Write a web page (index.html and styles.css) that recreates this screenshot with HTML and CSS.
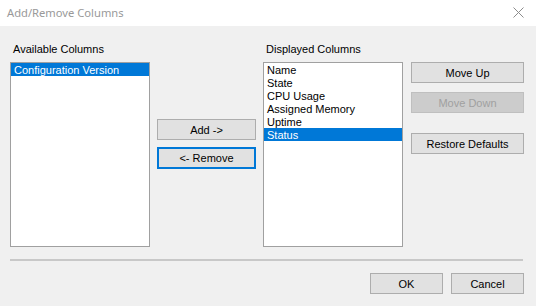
FILE: index.html
```html
<!DOCTYPE html>
<html lang="en">
<head>
    <meta charset="UTF-8">
    <meta name="viewport" content="width=device-width, initial-scale=1.0">
    <title>Add/Remove Columns</title>
    <link rel="stylesheet" href="styles.css">
</head>
<body>
    <div class="dialog">
        <div class="titlebar">
            <span class="title">Add/Remove Columns</span>
            <svg class="close" width="11" height="11" viewBox="0 0 11 11">
                <path d="M0.5 0.5 L10.5 10.5 M10.5 0.5 L0.5 10.5" stroke="#8c8c8c" stroke-width="1" fill="none"/>
            </svg>
        </div>
        <div class="client">
            <div class="columns">
                <div class="group">
                    <div class="label">Available Columns</div>
                    <ul class="listbox">
                        <li class="selected">Configuration Version</li>
                    </ul>
                </div>
                <div class="mid">
                    <button class="btn">Add -&gt;</button>
                    <button class="btn focused">&lt;- Remove</button>
                </div>
                <div class="group">
                    <div class="label">Displayed Columns</div>
                    <ul class="listbox">
                        <li>Name</li>
                        <li>State</li>
                        <li>CPU Usage</li>
                        <li>Assigned Memory</li>
                        <li>Uptime</li>
                        <li class="selected">Status</li>
                    </ul>
                </div>
                <div class="side">
                    <button class="btn">Move Up</button>
                    <button class="btn" disabled>Move Down</button>
                    <button class="btn restore">Restore Defaults</button>
                </div>
            </div>
            <div class="separator"></div>
            <div class="footer">
                <button class="btn wide">OK</button>
                <button class="btn wide">Cancel</button>
            </div>
        </div>
    </div>
</body>
</html>
```

FILE: styles.css
```css
body {
    margin: 0;
    padding: 0;
    background: #f0f0f0;
    font-family: "Liberation Sans", Arial, sans-serif;
    font-size: 11px;
    color: #000;
}
.dialog {
    width: 536px;
    height: 306px;
    overflow: hidden;
}
.titlebar {
    height: 26px;
    background: #fff;
    display: flex;
    align-items: center;
    justify-content: space-between;
    padding: 0 12px 0 7px;
}
.title {
    font-family: "Noto Sans", "Open Sans", sans-serif;
    font-size: 11.2px;
    color: #999;
    margin-top: -1px;
}
.close {
    display: block;
    margin-top: -1px;
}
.client {
    height: 280px;
    box-sizing: border-box;
    padding: 17px 12px 0 10px;
}
.columns {
    display: flex;
}
.group {
    width: 140px;
    display: flex;
    flex-direction: column;
}
.label {
    height: 13px;
    line-height: 13px;
    padding-left: 3px;
    margin-bottom: 6px;
}
.listbox {
    list-style: none;
    margin: 0;
    padding: 0;
    height: 185px;
    box-sizing: border-box;
    background: #fff;
    border: 1px solid #a0a0a0;
}
.listbox li {
    height: 13px;
    line-height: 14px;
    padding-left: 3px;
    white-space: nowrap;
}
.listbox li.selected {
    background: #0078d7;
    color: #fff;
}
.mid {
    width: 99px;
    margin: 0 7px;
    padding-top: 76px;
    display: flex;
    flex-direction: column;
    gap: 7px;
}
.side {
    width: 113px;
    margin-left: 8px;
    padding-top: 19px;
    display: flex;
    flex-direction: column;
    gap: 9px;
}
.btn {
    height: 21px;
    box-sizing: border-box;
    padding: 0;
    font-family: "Liberation Sans", Arial, sans-serif;
    font-size: 11px;
    color: #000;
    background: #e1e1e1;
    border: 1px solid #adadad;
    border-radius: 0;
}
.btn.focused {
    height: 22px;
    border: 2px solid #0078d7;
}
.btn:disabled {
    background: #cccccc;
    border-color: #bfbfbf;
    color: #a0a0a0;
}
.btn.restore {
    margin-top: 11px;
}
.separator {
    height: 2px;
    background: #c8c8c8;
    margin-top: 12px;
    margin-right: 1px;
}
.footer {
    display: flex;
    justify-content: flex-end;
    gap: 8px;
    margin-top: 12px;
}
.btn.wide {
    width: 73px;
}
```
